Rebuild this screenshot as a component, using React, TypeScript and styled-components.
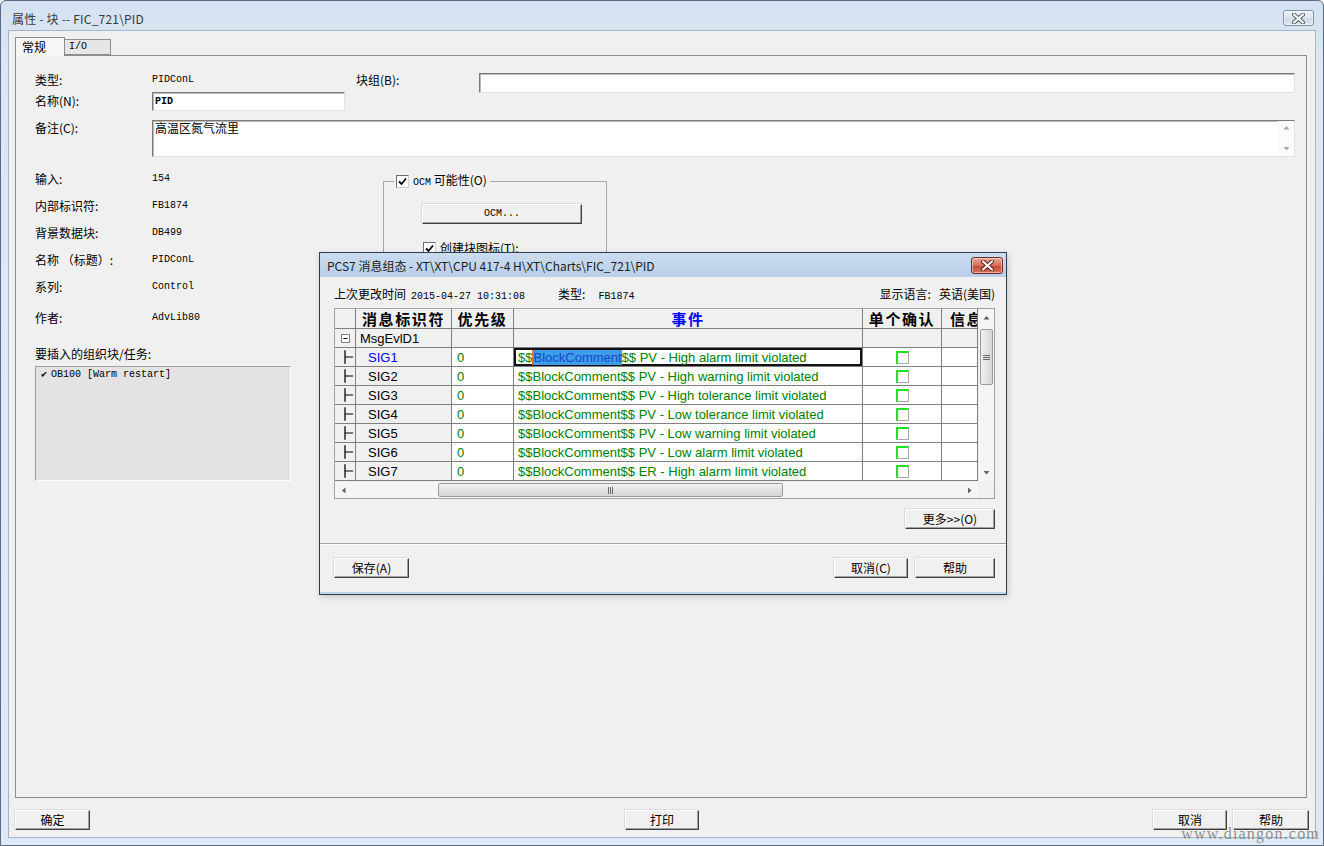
import React from "react";
import styled, { createGlobalStyle } from "styled-components";

const CJK = `"Noto Sans CJK SC", "Liberation Sans", sans-serif`;
const MONO = `"Liberation Mono", "Noto Sans CJK SC", monospace`;
const SANS = `"Liberation Sans", "Noto Sans CJK SC", sans-serif`;

const GlobalStyle = createGlobalStyle`
  html, body {
    margin: 0;
    padding: 0;
    background: #f0f0f0;
  }
  * {
    box-sizing: border-box;
  }
`;

const Window = styled.div`
  position: relative;
  width: 1324px;
  height: 846px;
  display: flex;
  flex-direction: column;
  background: linear-gradient(#d4e1f0, #dce7f3 60px, #dfe9f5);
  border: 1px solid #5a6b80;
  border-radius: 6px 6px 0 0;
  overflow: hidden;
  font-family: ${CJK};
  font-size: 12px;
  color: #000;
`;

const TitleBar = styled.div`
  height: 29px;
  flex-shrink: 0;
  display: flex;
  align-items: center;
  justify-content: space-between;
  padding: 5px 9px 0 11px;
`;

const WindowTitle = styled.div`
  font-size: 12px;
  color: #3a3a3a;
  letter-spacing: 0.2px;
`;

const CaptionClose = styled.div<{ $red?: boolean }>`
  width: ${(p) => (p.$red ? 32 : 31)}px;
  height: ${(p) => (p.$red ? 17 : 16)}px;
  display: flex;
  align-items: center;
  justify-content: center;
  border-radius: 3px;
  border: 1px solid ${(p) => (p.$red ? "#6e2a1f" : "#8090a6")};
  background: ${(p) =>
    p.$red
      ? "linear-gradient(#e9a898, #d5705a 50%, #c44a30 51%, #d3705a)"
      : "linear-gradient(#edf2f8, #dbe4ee 50%, #cfd9e5 51%, #dbe4ef)"};
  box-shadow: inset 0 0 0 1px rgba(255, 255, 255, 0.45);
`;

const Body = styled.div`
  flex: 1;
  margin: 0 7px 7px 7px;
  background: #f0f0f0;
  border: 1px solid #a5b4c6;
  display: flex;
  flex-direction: column;
  padding: 6px 6px 0 6px;
`;

const TabStrip = styled.div`
  height: 18px;
  display: flex;
  align-items: flex-end;
  flex-shrink: 0;
`;

const Tab = styled.div<{ $active?: boolean }>`
  position: relative;
  z-index: ${(p) => (p.$active ? 1 : 0)};
  width: ${(p) => (p.$active ? 50 : 46)}px;
  height: ${(p) => (p.$active ? 19 : 16)}px;
  margin-bottom: ${(p) => (p.$active ? -1 : 0)}px;
  padding: ${(p) => (p.$active ? "1px 0 0 6px" : "0 0 0 4px")};
  border: 1px solid #8d8d8d;
  border-bottom: ${(p) => (p.$active ? "none" : "1px solid #8d8d8d")};
  border-left: ${(p) => (p.$active ? "1px solid #8d8d8d" : "none")};
  background: ${(p) => (p.$active ? "#f7f7f7" : "#e6e6e6")};
  font-family: ${(p) => (p.$active ? CJK : MONO)};
  font-size: ${(p) => (p.$active ? 12 : 10)}px;
  line-height: ${(p) => (p.$active ? 16 : 14)}px;
`;

const TabPanel = styled.div`
  flex: 1;
  margin-right: 2px;
  border: 1px solid #8d8d8d;
  background: #f0f0f0;
  padding: 17px 11px 0 19px;
`;

const FieldRow = styled.div<{ $h: number; $mt?: number }>`
  display: grid;
  grid-template-columns: 117px 193px 11px 123px 1fr;
  height: ${(p) => p.$h}px;
  margin-top: ${(p) => p.$mt ?? 0}px;
`;

const Label = styled.div<{ $pt?: number }>`
  padding-top: ${(p) => p.$pt ?? 0}px;
  line-height: 14px;
  white-space: nowrap;
`;

const Value = styled.div<{ $lh?: number }>`
  font-family: ${MONO};
  font-size: 10px;
  line-height: ${(p) => p.$lh ?? 14}px;
`;

const TextBox = styled.div<{ $h: number; $span?: boolean }>`
  grid-column: ${(p) => (p.$span ? "2 / -1" : "auto")};
  height: ${(p) => p.$h}px;
  display: flex;
  background: #fff;
  border: 1px solid;
  border-color: #7a7a7a #e2e2e2 #e2e2e2 #7a7a7a;
  box-shadow: inset 1px 1px 0 #b9b9b9;
`;

const BoxText = styled.div<{ $mono?: boolean }>`
  flex: 1;
  padding: ${(p) => (p.$mono ? "2px 0 0 2px" : "0 0 0 2px")};
  font-family: ${(p) => (p.$mono ? MONO : CJK)};
  font-size: ${(p) => (p.$mono ? 10 : 12)}px;
  font-weight: ${(p) => (p.$mono ? 700 : 400)};
  line-height: 14px;
`;

const MemoScroll = styled.div`
  width: 16px;
  display: flex;
  flex-direction: column;
  justify-content: space-between;
  align-items: center;
  padding: 4px 0 4px;
  background: #fbfbfb;
`;

const Lower = styled.div`
  display: flex;
  margin-top: 8px;
`;

const InfoColumn = styled.div`
  width: 348px;
  display: flex;
  flex-direction: column;
`;

const InfoRow = styled.div<{ $mt?: number }>`
  display: grid;
  grid-template-columns: 117px 1fr;
  height: 27px;
  line-height: 27px;
  margin-top: ${(p) => p.$mt ?? 0}px;
`;

const SectionLabel = styled.div`
  margin-top: 15px;
  line-height: 16px;
`;

const ListBox = styled.div`
  width: 256px;
  height: 115px;
  margin-top: 4px;
  background: #e3e3e3;
  border: 1px solid;
  border-color: #a0a0a0 #ffffff #ffffff #a0a0a0;
  padding: 1px 0 0 5px;
  display: flex;
  flex-direction: column;
`;

const ListItem = styled.div`
  display: flex;
  align-items: center;
  gap: 4px;
  font-family: ${MONO};
  font-size: 10px;
  line-height: 14px;
`;

const GroupBox = styled.div`
  width: 224px;
  height: 230px;
  margin-top: 16px;
  border: 1px solid #a8a8a8;
  display: flex;
  flex-direction: column;
  align-items: flex-start;
`;

const Legend = styled.div`
  display: flex;
  align-items: center;
  gap: 4px;
  height: 14px;
  margin: -8px 0 0 10px;
  padding: 0 3px 0 2px;
  background: #f0f0f0;
  line-height: 14px;
`;

const CheckRow = styled.div<{ $mt: number; $ml: number }>`
  display: flex;
  align-items: center;
  gap: 4px;
  height: 14px;
  margin: ${(p) => p.$mt}px 0 0 ${(p) => p.$ml}px;
  line-height: 14px;
`;

const Box = styled.span`
  width: 13px;
  height: 13px;
  display: inline-flex;
  align-items: center;
  justify-content: center;
  background: #fff;
  border: 1px solid;
  border-color: #6d6d6d #cfcfcf #cfcfcf #6d6d6d;
`;

const Btn = styled.div<{ $w: number; $mt?: number; $ml?: number }>`
  width: ${(p) => p.$w}px;
  height: 20px;
  margin-top: ${(p) => p.$mt ?? 0}px;
  margin-left: ${(p) => p.$ml ?? 0}px;
  display: flex;
  align-items: center;
  justify-content: center;
  background: #f0f0f0;
  border: 1px solid;
  border-color: #ffffff #3f3f3f #3f3f3f #ffffff;
  box-shadow: inset -1px -1px 0 #a0a0a0, -1px -1px 0 #dcdcdc;
  font-size: 12px;
  line-height: 14px;
  white-space: nowrap;
`;

const MonoText = styled.span`
  font-family: ${MONO};
  font-size: 10px;
`;

const ButtonRow = styled.div`
  height: 39px;
  flex-shrink: 0;
  padding-top: 12px;
  display: grid;
  grid-template-columns: 1fr auto 1fr;
  align-items: start;
`;

const RightGroup = styled.div`
  justify-self: end;
  display: flex;
  gap: 6px;
`;

const Watermark = styled.div`
  position: absolute;
  right: 3px;
  bottom: 2px;
  font-family: "Liberation Serif", serif;
  font-size: 16px;
  letter-spacing: 1.2px;
  color: rgba(110, 110, 110, 0.75);
`;

/* ---------- message dialog ---------- */

const Dialog = styled.div`
  position: absolute;
  left: 318px;
  top: 251px;
  width: 688px;
  height: 343px;
  display: flex;
  flex-direction: column;
  background: #bcd4ec;
  border: 1px solid #2e3e52;
  box-shadow: 1px 2px 6px rgba(0, 0, 0, 0.18);
`;

const DialogTitle = styled.div`
  height: 24px;
  flex-shrink: 0;
  display: flex;
  align-items: center;
  justify-content: space-between;
  padding: 0 3px 0 7px;
  background: linear-gradient(#cadcf0, #b9cfe8);
  font-size: 12px;
  color: #1c1c1c;
`;

const DialogBody = styled.div`
  flex: 1;
  margin: 0 0 2px 0;
  background: #f0f0f0;
  display: flex;
  flex-direction: column;
`;

const DialogMain = styled.div`
  padding: 0 11px 0 14px;
  display: flex;
  flex-direction: column;
`;

const InfoLine = styled.div`
  height: 31px;
  padding-top: 1px;
  display: flex;
  align-items: center;
  white-space: nowrap;
`;

const Spaced = styled.span<{ $ml?: number; $auto?: boolean }>`
  margin-left: ${(p) => (p.$auto ? "auto" : `${p.$ml ?? 0}px`)};
`;

const TableFrame = styled.div`
  width: 661px;
  height: 191px;
  border: 1px solid #a0a0a0;
  display: grid;
  grid-template-columns: 643px 16px;
  grid-template-rows: 172px 17px;
  background: #fff;
`;

const GridBody = styled.div`
  display: flex;
  flex-direction: column;
  overflow: hidden;
`;

const GridRow = styled.div<{ $h: number }>`
  display: grid;
  grid-template-columns: 21px 96px 62px 349px 79px 36px;
  height: ${(p) => p.$h}px;
  flex-shrink: 0;
`;

const Cell = styled.div<{
  $bg?: string;
  $pl?: number;
  $center?: boolean;
  $focus?: boolean;
}>`
  display: flex;
  align-items: center;
  justify-content: ${(p) => (p.$center ? "center" : "flex-start")};
  padding-left: ${(p) => p.$pl ?? 0}px;
  background: ${(p) => p.$bg ?? "#fff"};
  border-right: 1px solid #808080;
  border-bottom: 1px solid #808080;
  overflow: hidden;
  white-space: nowrap;
  box-shadow: ${(p) => (p.$focus ? "inset 0 0 0 2px #111" : "none")};
`;

const HeadText = styled.span<{ $blue?: boolean }>`
  font-size: 15px;
  font-weight: 700;
  letter-spacing: 1.6px;
  line-height: 18px;
  color: ${(p) => (p.$blue ? "#0000ff" : "#000")};
`;

const RowText = styled.span<{ $color?: string }>`
  font-family: ${SANS};
  font-size: 13px;
  line-height: 17px;
  color: ${(p) => p.$color ?? "#000"};
`;

const Selected = styled.span`
  background: #3f9ceb;
  color: #1248c8;
  border-left: 1px solid #e07020;
`;

const AckBox = styled.span`
  width: 13px;
  height: 13px;
  background: #fff;
  border-style: solid;
  border-width: 2px 1px 1px 2px;
  border-color: #22e022 #a8a8a8 #a8a8a8 #22e022;
`;

const VScroll = styled.div`
  display: flex;
  flex-direction: column;
  align-items: stretch;
  background: #f5f5f5;
  border-left: 1px solid #ececec;
`;

const HScroll = styled.div`
  display: flex;
  align-items: stretch;
  background: #f5f5f5;
  border-top: 1px solid #ececec;
`;

const ArrowCell = styled.div<{ $size: number; $vertical?: boolean }>`
  flex-shrink: 0;
  ${(p) => (p.$vertical ? `height: ${p.$size}px;` : `width: ${p.$size}px;`)}
  display: flex;
  align-items: center;
  justify-content: center;
`;

const Thumb = styled.div<{ $vertical?: boolean; $len: number; $offset: number }>`
  flex-shrink: 0;
  ${(p) =>
    p.$vertical
      ? `height: ${p.$len}px; margin: ${p.$offset}px 1px 0 1px;`
      : `width: ${p.$len}px; margin: 1px 0 1px ${p.$offset}px;`}
  display: flex;
  align-items: center;
  justify-content: center;
  border: 1px solid #9a9a9a;
  border-radius: 2px;
  background: ${(p) =>
    p.$vertical
      ? "linear-gradient(90deg, #f2f2f2, #e2e2e2 50%, #d6d6d6)"
      : "linear-gradient(#f2f2f2, #e2e2e2 50%, #d6d6d6)"};
`;

const Fill = styled.div`
  flex: 1;
`;

const Corner = styled.div`
  background: #f0f0f0;
`;

const MoreRow = styled.div`
  display: flex;
  justify-content: flex-end;
  margin-top: 10px;
`;

const Separator = styled.div`
  margin-top: 14px;
  height: 2px;
  border-top: 1px solid #a0a0a0;
  border-bottom: 1px solid #ffffff;
`;

const DialogFooter = styled.div`
  display: flex;
  padding: 13px 11px 0 14px;
  gap: 7px;
`;

/* ---------- drawings ---------- */

const CloseGlyph = ({ red }: { red?: boolean }) => (
  <svg width="13" height="11" viewBox="0 0 13 11">
    <path
      d="M2 1.5 L11 9.5 M11 1.5 L2 9.5"
      stroke={red ? "#5a1a10" : "#4c5868"}
      strokeWidth="4"
      strokeLinecap="round"
    />
    <path
      d="M2 1.5 L11 9.5 M11 1.5 L2 9.5"
      stroke="#ffffff"
      strokeWidth="2.2"
      strokeLinecap="round"
    />
  </svg>
);

const Tick = () => (
  <svg width="11" height="11" viewBox="0 0 11 11">
    <path d="M2 5.5 L4.5 8 L9 2.5" stroke="#000" strokeWidth="1.8" fill="none" />
  </svg>
);

const TreeBranch = () => (
  <svg width="21" height="18" viewBox="0 0 21 18">
    <path d="M10.5 2 V16 M10.5 9 H19" stroke="#000" strokeWidth="1.3" fill="none" />
  </svg>
);

const TreeToggle = () => (
  <svg width="11" height="11" viewBox="0 0 11 11">
    <rect x="1.5" y="1.5" width="8" height="8" fill="#fff" stroke="#808080" />
    <path d="M3.5 5.5 H7.5" stroke="#000" />
  </svg>
);

const Tri = ({ dir, color = "#606060" }: { dir: "up" | "down" | "left" | "right"; color?: string }) => {
  const d = {
    up: "M0.5 4.5 L3.5 1 L6.5 4.5 Z",
    down: "M0.5 1 L3.5 4.5 L6.5 1 Z",
    left: "M4.5 0.5 L1 3.5 L4.5 6.5 Z",
    right: "M1 0.5 L4.5 3.5 L1 6.5 Z",
  }[dir];
  const vertical = dir === "up" || dir === "down";
  return (
    <svg width={vertical ? 7 : 6} height={vertical ? 6 : 7}>
      <path d={d} fill={color} />
    </svg>
  );
};

const Grip = ({ vertical }: { vertical?: boolean }) =>
  vertical ? (
    <svg width="7" height="7">
      <path d="M0 1.5 H7 M0 3.5 H7 M0 5.5 H7" stroke="#6b6b6b" />
    </svg>
  ) : (
    <svg width="7" height="7">
      <path d="M1.5 0 V7 M3.5 0 V7 M5.5 0 V7" stroke="#6b6b6b" />
    </svg>
  );

/* ---------- data ---------- */

const infoRows: [string, string][] = [
  ["输入:", "154"],
  ["内部标识符:", "FB1874"],
  ["背景数据块:", "DB499"],
  ["名称 （标题）:", "PIDConL"],
  ["系列:", "Control"],
  ["作者:", "AdvLib80"],
];

const signals: [string, string][] = [
  ["SIG1", "PV - High alarm limit violated"],
  ["SIG2", "PV - High warning limit violated"],
  ["SIG3", "PV - High tolerance limit violated"],
  ["SIG4", "PV - Low tolerance limit violated"],
  ["SIG5", "PV - Low warning limit violated"],
  ["SIG6", "PV - Low alarm limit violated"],
  ["SIG7", "ER - High alarm limit violated"],
];

const GREY = "#f0f0f0";
const GREEN = "#008000";

function MessageDialog() {
  return (
    <Dialog>
      <DialogTitle>
        <span>PCS7 消息组态 - XT\XT\CPU 417-4 H\XT\Charts\FIC_721\PID</span>
        <CaptionClose $red>
          <CloseGlyph red />
        </CaptionClose>
      </DialogTitle>
      <DialogBody>
        <DialogMain>
          <InfoLine>
            <span>上次更改时间</span>
            <Spaced $ml={5}>
              <MonoText>2015-04-27 10:31:08</MonoText>
            </Spaced>
            <Spaced $ml={33}>类型:</Spaced>
            <Spaced $ml={13}>
              <MonoText>FB1874</MonoText>
            </Spaced>
            <Spaced $auto>显示语言:</Spaced>
            <Spaced $ml={8}>英语(美国)</Spaced>
          </InfoLine>

          <TableFrame>
            <GridBody>
              <GridRow $h={20}>
                <Cell $bg={GREY} />
                <Cell $bg={GREY} $center>
                  <HeadText>消息标识符</HeadText>
                </Cell>
                <Cell $bg={GREY} $center>
                  <HeadText>优先级</HeadText>
                </Cell>
                <Cell $bg={GREY} $center>
                  <HeadText $blue>事件</HeadText>
                </Cell>
                <Cell $bg={GREY} $center>
                  <HeadText>单个确认</HeadText>
                </Cell>
                <Cell $bg={GREY} $pl={8}>
                  <HeadText>信息文本</HeadText>
                </Cell>
              </GridRow>
              <GridRow $h={19}>
                <Cell $bg={GREY} $center>
                  <TreeToggle />
                </Cell>
                <Cell $bg={GREY} $pl={4}>
                  <RowText>MsgEvlD1</RowText>
                </Cell>
                <Cell $bg={GREY} />
                <Cell $bg={GREY} />
                <Cell $bg={GREY} />
                <Cell $bg={GREY} />
              </GridRow>
              {signals.map(([sig, text], i) => (
                <GridRow $h={19} key={sig}>
                  <Cell $bg={GREY}>
                    <TreeBranch />
                  </Cell>
                  <Cell $bg={GREY} $pl={12}>
                    <RowText $color={i === 0 ? "#0000ff" : "#000"}>{sig}</RowText>
                  </Cell>
                  <Cell $pl={5}>
                    <RowText $color={GREEN}>0</RowText>
                  </Cell>
                  <Cell $pl={4} $focus={i === 0}>
                    {i === 0 ? (
                      <RowText $color={GREEN}>
                        $$<Selected>BlockComment</Selected>$$ {text}
                      </RowText>
                    ) : (
                      <RowText $color={GREEN}>$$BlockComment$$ {text}</RowText>
                    )}
                  </Cell>
                  <Cell $center>
                    <AckBox />
                  </Cell>
                  <Cell />
                </GridRow>
              ))}
            </GridBody>

            <VScroll>
              <ArrowCell $vertical $size={17}>
                <Tri dir="up" />
              </ArrowCell>
              <Thumb $vertical $len={56} $offset={3}>
                <Grip vertical />
              </Thumb>
              <Fill />
              <ArrowCell $vertical $size={17}>
                <Tri dir="down" />
              </ArrowCell>
            </VScroll>

            <HScroll>
              <ArrowCell $size={17}>
                <Tri dir="left" />
              </ArrowCell>
              <Thumb $len={345} $offset={86}>
                <Grip />
              </Thumb>
              <Fill />
              <ArrowCell $size={17}>
                <Tri dir="right" />
              </ArrowCell>
            </HScroll>
            <Corner />
          </TableFrame>

          <MoreRow>
            <Btn $w={90}>更多&gt;&gt;(O)</Btn>
          </MoreRow>
        </DialogMain>
        <Separator />
        <DialogFooter>
          <Btn $w={75}>保存(A)</Btn>
          <Fill />
          <Btn $w={74}>取消(C)</Btn>
          <Btn $w={80}>帮助</Btn>
        </DialogFooter>
      </DialogBody>
    </Dialog>
  );
}

export default function App() {
  return (
    <>
      <GlobalStyle />
      <Window>
        <TitleBar>
          <WindowTitle>属性 - 块 -- FIC_721\PID</WindowTitle>
          <CaptionClose>
            <CloseGlyph />
          </CaptionClose>
        </TitleBar>

        <Body>
          <TabStrip>
            <Tab $active>常规</Tab>
            <Tab>I/O</Tab>
          </TabStrip>

          <TabPanel>
            <FieldRow $h={19}>
              <Label>类型:</Label>
              <Value>PIDConL</Value>
              <span />
              <Label>块组(B):</Label>
              <TextBox $h={20} />
            </FieldRow>
            <FieldRow $h={19}>
              <Label $pt={2}>名称(N):</Label>
              <TextBox $h={19}>
                <BoxText $mono>PID</BoxText>
              </TextBox>
            </FieldRow>
            <FieldRow $h={37} $mt={9}>
              <Label $pt={1}>备注(C):</Label>
              <TextBox $h={37} $span>
                <BoxText>高温区氮气流里</BoxText>
                <MemoScroll>
                  <Tri dir="up" color="#a8a8a8" />
                  <Tri dir="down" color="#a8a8a8" />
                </MemoScroll>
              </TextBox>
            </FieldRow>

            <Lower>
              <InfoColumn>
                {infoRows.map(([label, value], i) => (
                  <InfoRow key={label} $mt={i === infoRows.length - 1 ? 4 : 0}>
                    <span>{label}</span>
                    <Value $lh={27}>{value}</Value>
                  </InfoRow>
                ))}
                <SectionLabel>要插入的组织块/任务:</SectionLabel>
                <ListBox>
                  <ListItem>
                    <span>✔</span>
                    <span>OB100 [Warm restart]</span>
                  </ListItem>
                </ListBox>
              </InfoColumn>

              <GroupBox>
                <Legend>
                  <Box>
                    <Tick />
                  </Box>
                  <span>
                    <MonoText>OCM</MonoText> 可能性(O)
                  </span>
                </Legend>
                <Btn $w={160} $mt={16} $ml={38}>
                  <MonoText>OCM...</MonoText>
                </Btn>
                <CheckRow $mt={17} $ml={39}>
                  <Box>
                    <Tick />
                  </Box>
                  <span>创建块图标(T):</span>
                </CheckRow>
              </GroupBox>
            </Lower>
          </TabPanel>

          <ButtonRow>
            <Btn $w={75}>确定</Btn>
            <Btn $w={74}>打印</Btn>
            <RightGroup>
              <Btn $w={74}>取消</Btn>
              <Btn $w={76}>帮助</Btn>
            </RightGroup>
          </ButtonRow>
        </Body>

        <MessageDialog />
        <Watermark>www.diangon.com</Watermark>
      </Window>
    </>
  );
}
